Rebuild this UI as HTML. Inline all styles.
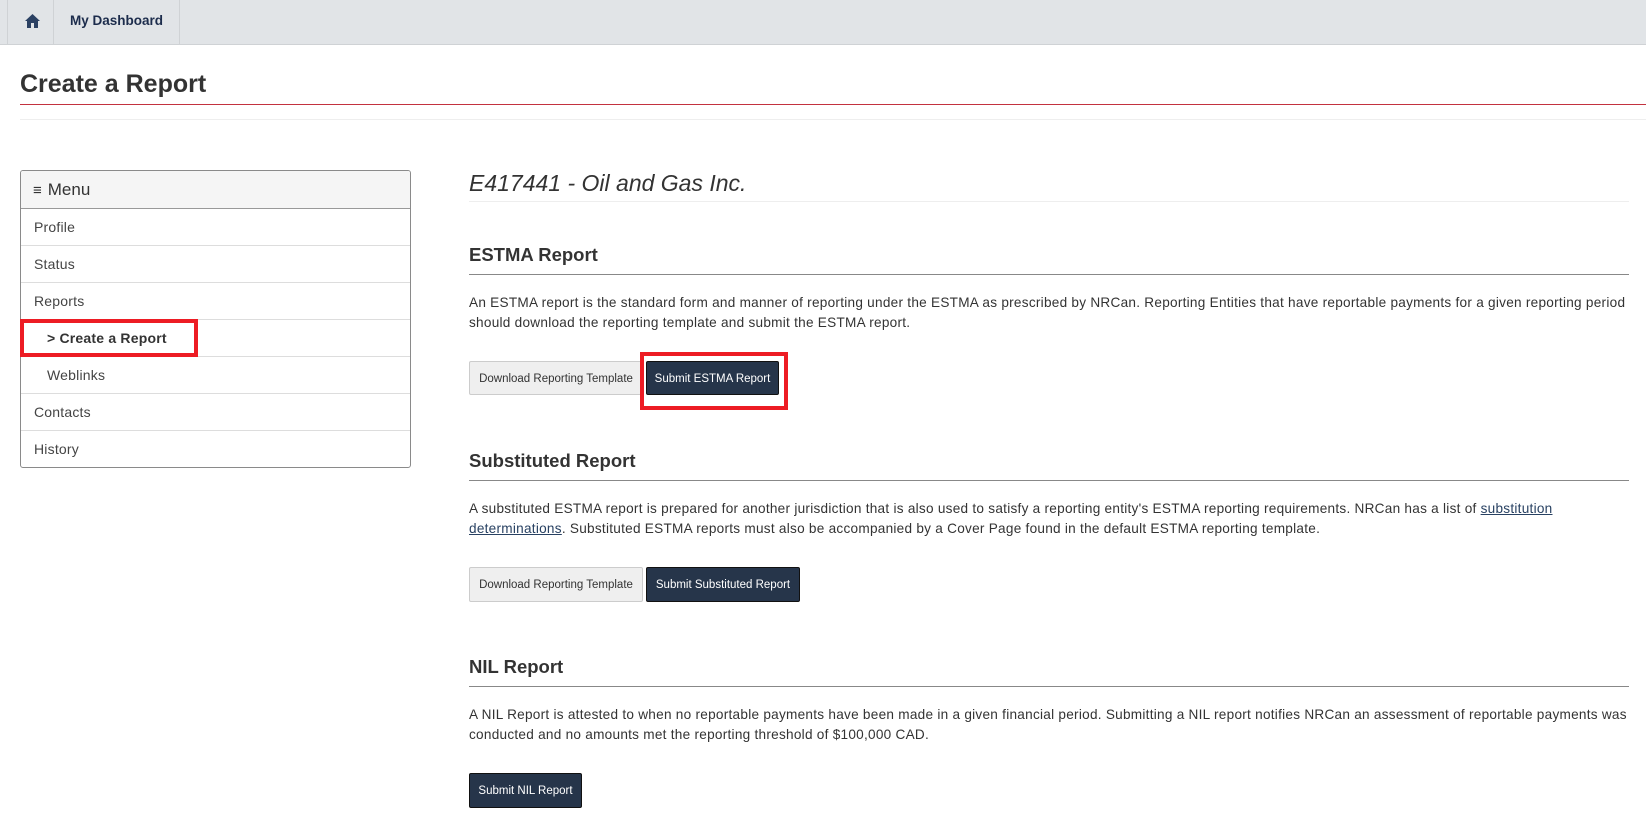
<!DOCTYPE html>
<html><head><meta charset="utf-8"><style>
body{margin:0;width:1646px;height:824px;overflow:hidden;background:#fff;font-family:"Liberation Sans",sans-serif;color:#333;position:relative}
.a{position:absolute}
.bar{left:0;top:0;width:1646px;height:44px;background:#e1e4e7;border-bottom:1px solid #cfd2d5}
.sep{top:0;width:1px;height:44px;background:#cfd2d5}
h1{position:absolute;left:20px;top:70px;margin:0;font-size:25px;font-weight:bold;color:#333}
.menu{left:20px;top:170px;width:389px;height:296px;border:1px solid #8a8a8a;border-radius:3px;overflow:hidden}
.mh{height:37px;background:#f5f5f5;border-bottom:1px solid #999;font-size:17px;line-height:37px;padding-left:12px}
.mi{height:36px;border-bottom:1px solid #ddd;font-size:14px;line-height:36px;padding-left:13px;color:#444;letter-spacing:0.2px}
.sub{padding-left:26px}
.h2{font-size:18.5px;font-weight:bold;left:469px;width:1160px;border-bottom:1px solid #888;padding-bottom:8px}
.p{left:469px;width:1164px;font-size:13.6px;line-height:19.5px;color:#333;letter-spacing:0.26px}
.btn{height:34px;line-height:34px;font-size:11.5px;text-align:center;border-radius:2px;box-sizing:border-box}
.lt{background:#efefef;border:1px solid #ccc;color:#333}
.dk{background:#26354a;border:1px solid #111;color:#fff}
.red{border:4px solid #ed1c24;box-sizing:border-box}
</style></head><body>
<div class="a bar"></div>
<div class="a sep" style="left:7px"></div><div class="a sep" style="left:53px"></div><div class="a sep" style="left:179px"></div>
<svg class="a" style="left:25px;top:14px" width="15" height="14" viewBox="0 0 15 14"><path d="M7.5 0L0 7h2v7h4V9h3v5h4V7h2z" fill="#2b4163"/></svg>
<div class="a" style="left:70px;top:13px;font-size:13.5px;font-weight:bold;color:#1c2c4c">My Dashboard</div>
<h1>Create a Report</h1>
<div class="a" style="left:20px;top:104px;width:1626px;height:1px;background:#c3323f"></div>
<div class="a" style="left:20px;top:119px;width:1626px;height:1px;background:#eee"></div>
<div class="a menu">
<div class="mh"><span style="font-size:15px;margin-right:6px">&#8801;</span>Menu</div>
<div class="mi">Profile</div><div class="mi">Status</div><div class="mi">Reports</div>
<div class="mi sub" style="font-weight:bold;color:#333">&gt; Create a Report</div>
<div class="mi sub">Weblinks</div><div class="mi">Contacts</div><div class="mi" style="border:0">History</div>
</div>
<div class="a red" style="left:20px;top:319px;width:178px;height:38px"></div>
<div class="a" style="left:469px;top:170px;width:1160px;font-size:23px;font-style:italic;border-bottom:1px solid #eee;padding-bottom:4px">E417441 - Oil and Gas Inc.</div>
<div class="a h2" style="top:244px">ESTMA Report</div>
<div class="a p" style="top:293px">An ESTMA report is the standard form and manner of reporting under the ESTMA as prescribed by NRCan. Reporting Entities that have reportable payments for a given reporting period should download the reporting template and submit the ESTMA report.</div>
<div class="a btn lt" style="left:469px;top:361px;width:174px">Download Reporting Template</div>
<div class="a btn dk" style="left:646px;top:361px;width:133px">Submit ESTMA Report</div>
<div class="a red" style="left:640px;top:352px;width:148px;height:58px"></div>
<div class="a h2" style="top:450px">Substituted Report</div>
<div class="a p" style="top:499px">A substituted ESTMA report is prepared for another jurisdiction that is also used to satisfy a reporting entity's ESTMA reporting requirements. NRCan has a list of <u style="color:#284162">substitution</u><br><u style="color:#284162">determinations</u>. Substituted ESTMA reports must also be accompanied by a Cover Page found in the default ESTMA reporting template.</div>
<div class="a btn lt" style="left:469px;top:567px;width:174px;height:35px">Download Reporting Template</div>
<div class="a btn dk" style="left:646px;top:567px;width:154px;height:35px">Submit Substituted Report</div>
<div class="a h2" style="top:656px">NIL Report</div>
<div class="a p" style="top:705px">A NIL Report is attested to when no reportable payments have been made in a given financial period. Submitting a NIL report notifies NRCan an assessment of reportable payments was<br>conducted and no amounts met the reporting threshold of $100,000 CAD.</div>
<div class="a btn dk" style="left:469px;top:773px;width:113px;height:35px">Submit NIL Report</div>
</body></html>
